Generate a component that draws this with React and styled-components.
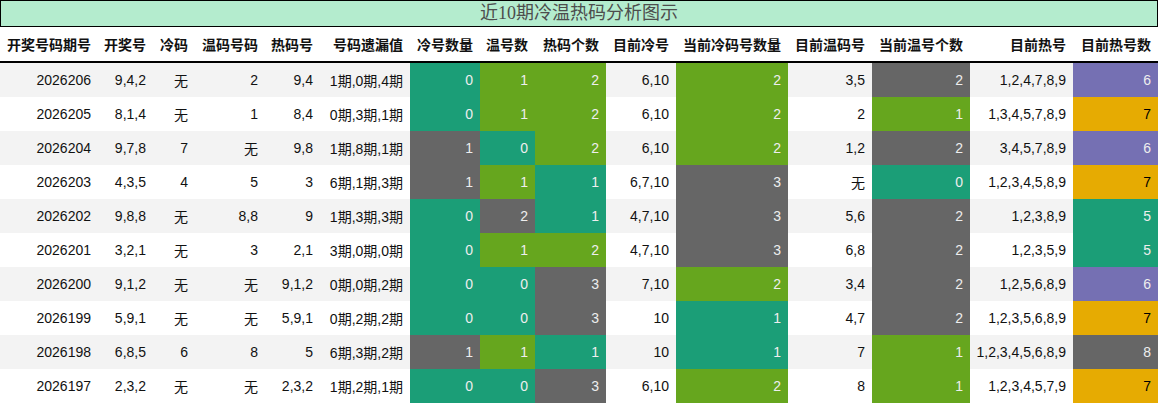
import React from "react";
import styled, { createGlobalStyle } from "styled-components";

const GlobalStyle = createGlobalStyle`
  html, body {
    margin: 0;
    padding: 0;
    background: #ffffff;
  }
  body {
    font-family: "Liberation Sans", "Noto Sans CJK SC", sans-serif;
  }
`;

const palette = {
  teal: "#1b9e77",
  green: "#66a61e",
  gray: "#666666",
  purple: "#7570b3",
  orange: "#e6ab02",
};

const Wrapper = styled.div`
  width: 1158px;
  height: 404px;
  overflow: hidden;
`;

const Title = styled.div`
  box-sizing: border-box;
  height: 27px;
  border: 1px solid #000;
  background: #b4ecce;
  color: #4d4d4d;
  font-family: "Liberation Serif", "Noto Sans CJK SC", serif;
  font-size: 18px;
  line-height: 24px;
  text-align: center;
`;

const Table = styled.table`
  width: 1158px;
  table-layout: fixed;
  border-collapse: collapse;
  border-spacing: 0;
  font-size: 14px;
  color: #111;
`;

const HeadCell = styled.th`
  height: 34px;
  padding: 0 7px 0 0;
  text-align: right;
  font-weight: bold;
  white-space: nowrap;
  color: #111;
  border-bottom: 2px solid #000;
`;

const Row = styled.tr`
  background: ${({ $odd }) => ($odd ? "#f3f3f3" : "#ffffff")};
`;

const Cell = styled.td`
  height: 34px;
  padding: 0 7px 0 0;
  text-align: right;
  white-space: nowrap;
  background: ${({ $bg }) => ($bg ? palette[$bg] : "transparent")};
  color: ${({ $bg }) =>
    !$bg ? "#111" : $bg === "orange" ? "#000" : "#eeeeee"};
`;

const columns = [
  ["开奖号码期号", 98],
  ["开奖号", 55],
  ["冷码", 42],
  ["温码号码", 70],
  ["热码号", 55],
  ["号码遗漏值", 90],
  ["冷号数量", 70],
  ["温号数", 55],
  ["热码个数", 71],
  ["目前冷号", 70],
  ["当前冷码号数量", 112],
  ["目前温码号", 84],
  ["当前温号个数", 98],
  ["目前热号", 103],
  ["目前热号数", 85],
];

// value|color for the coloured columns
const rows = [
  ["2026206", "9,4,2", "无", "2", "9,4", "1期,0期,4期", "0|teal", "1|green", "2|green", "6,10", "2|green", "3,5", "2|gray", "1,2,4,7,8,9", "6|purple"],
  ["2026205", "8,1,4", "无", "1", "8,4", "0期,3期,1期", "0|teal", "1|green", "2|green", "6,10", "2|green", "2", "1|green", "1,3,4,5,7,8,9", "7|orange"],
  ["2026204", "9,7,8", "7", "无", "9,8", "1期,8期,1期", "1|gray", "0|teal", "2|green", "6,10", "2|green", "1,2", "2|gray", "3,4,5,7,8,9", "6|purple"],
  ["2026203", "4,3,5", "4", "5", "3", "6期,1期,3期", "1|gray", "1|green", "1|teal", "6,7,10", "3|gray", "无", "0|teal", "1,2,3,4,5,8,9", "7|orange"],
  ["2026202", "9,8,8", "无", "8,8", "9", "1期,3期,3期", "0|teal", "2|gray", "1|teal", "4,7,10", "3|gray", "5,6", "2|gray", "1,2,3,8,9", "5|teal"],
  ["2026201", "3,2,1", "无", "3", "2,1", "3期,0期,0期", "0|teal", "1|green", "2|green", "4,7,10", "3|gray", "6,8", "2|gray", "1,2,3,5,9", "5|teal"],
  ["2026200", "9,1,2", "无", "无", "9,1,2", "0期,0期,2期", "0|teal", "0|teal", "3|gray", "7,10", "2|green", "3,4", "2|gray", "1,2,5,6,8,9", "6|purple"],
  ["2026199", "5,9,1", "无", "无", "5,9,1", "0期,2期,2期", "0|teal", "0|teal", "3|gray", "10", "1|teal", "4,7", "2|gray", "1,2,3,5,6,8,9", "7|orange"],
  ["2026198", "6,8,5", "6", "8", "5", "6期,3期,2期", "1|gray", "1|green", "1|teal", "10", "1|teal", "7", "1|green", "1,2,3,4,5,6,8,9", "8|gray"],
  ["2026197", "2,3,2", "无", "无", "2,3,2", "1期,2期,1期", "0|teal", "0|teal", "3|gray", "6,10", "2|green", "8", "1|green", "1,2,3,4,5,7,9", "7|orange"],
];

export default function App() {
  return (
    <Wrapper>
      <GlobalStyle />
      <Title>近10期冷温热码分析图示</Title>
      <Table>
        <colgroup>
          {columns.map(([name, w]) => (
            <col key={name} style={{ width: w }} />
          ))}
        </colgroup>
        <thead>
          <tr>
            {columns.map(([name]) => (
              <HeadCell key={name}>{name}</HeadCell>
            ))}
          </tr>
        </thead>
        <tbody>
          {rows.map((row, i) => (
            <Row key={row[0]} $odd={i % 2 === 0}>
              {row.map((value, j) => {
                const [text, bg] = value.split("|");
                return (
                  <Cell key={j} $bg={bg}>
                    {text}
                  </Cell>
                );
              })}
            </Row>
          ))}
        </tbody>
      </Table>
    </Wrapper>
  );
}
